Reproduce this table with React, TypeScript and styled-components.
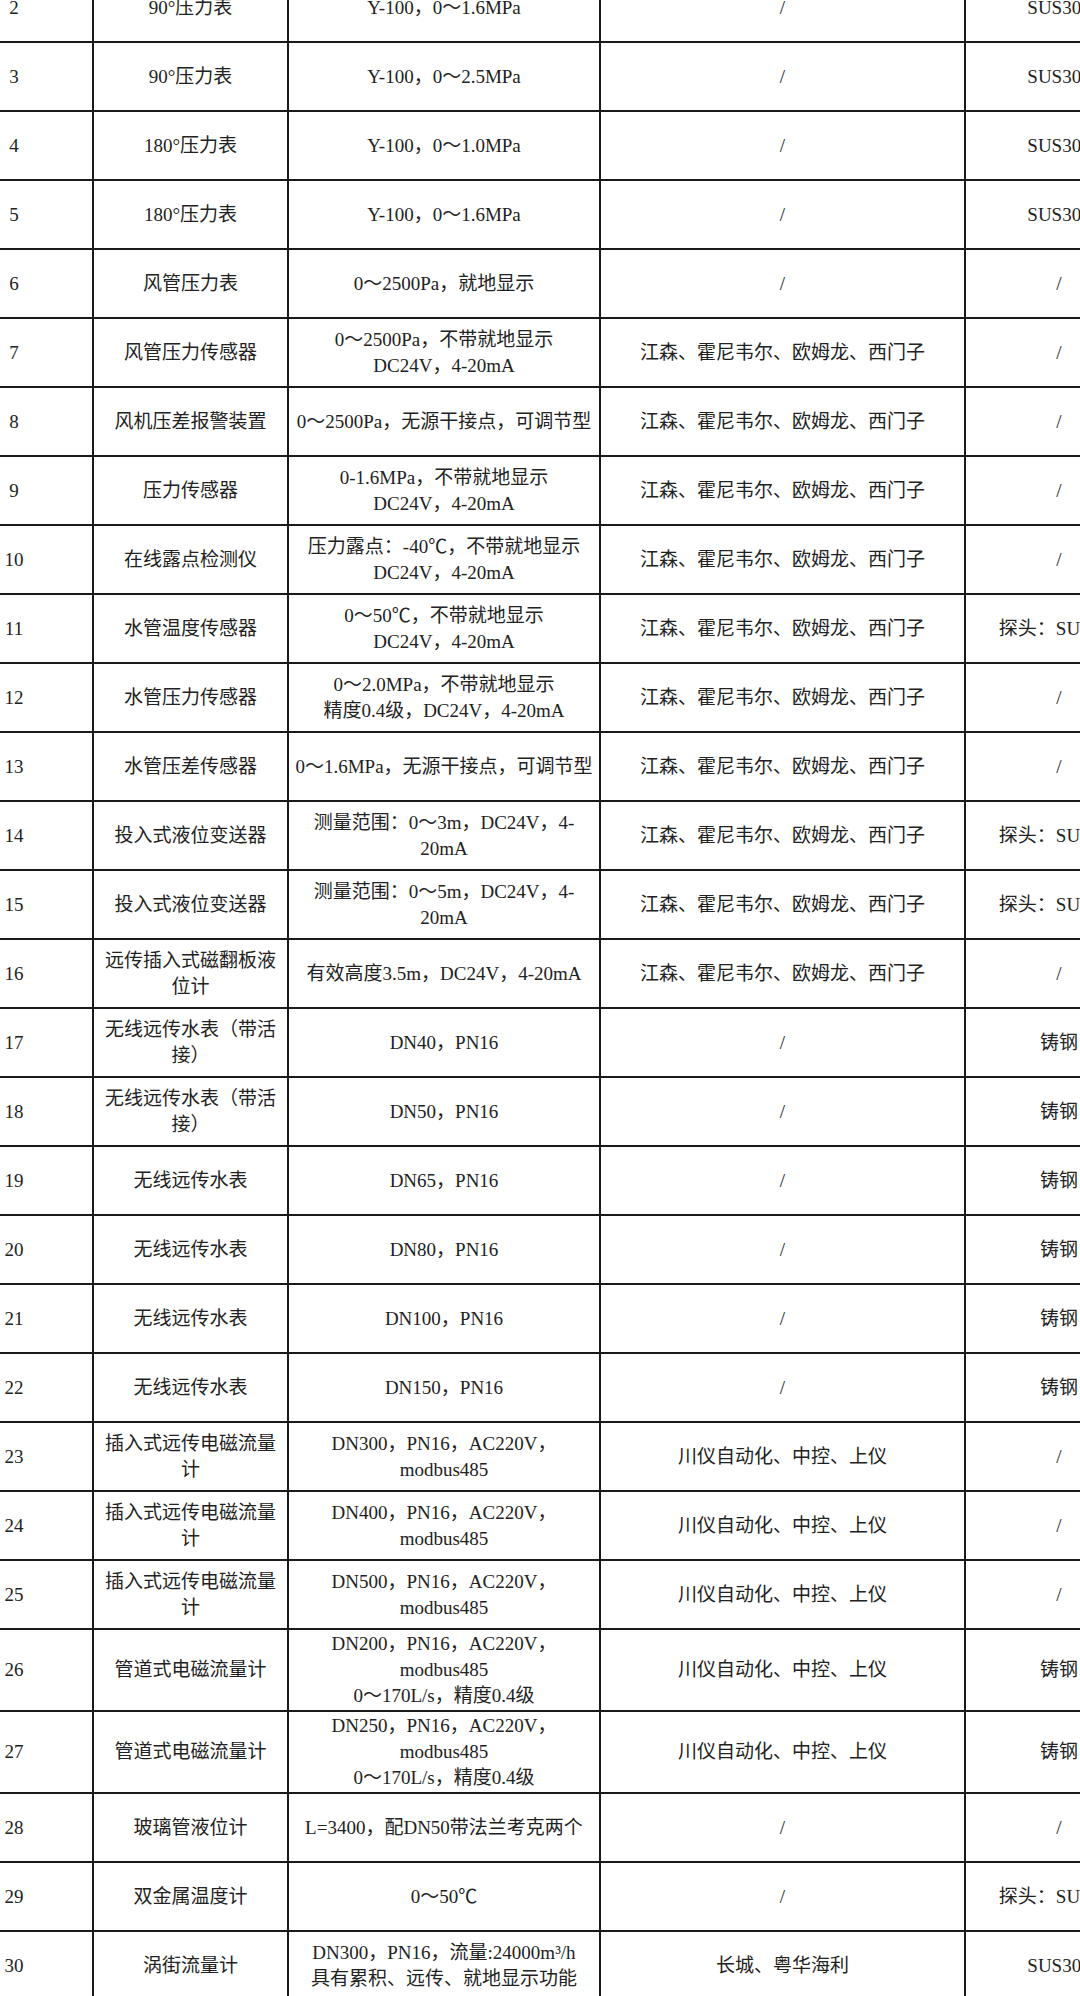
import styled, { createGlobalStyle } from 'styled-components';

const GlobalStyle = createGlobalStyle`
  html, body {
    margin: 0;
    padding: 0;
    background: #ffffff;
  }
  body {
    font-family: "Liberation Serif", "Noto Sans CJK SC", serif;
  }
`;

const JS = '江森、霍尼韦尔、欧姆龙、西门子';
const CY = '川仪自动化、中控、上仪';

// [序号, 名称, 规格, 品牌, 材质] — "\n" splits a cell into lines
const rows: [number, string, string, string, string][] = [
  [2, '90°压力表', 'Y-100，0～1.6MPa', '/', 'SUS304'],
  [3, '90°压力表', 'Y-100，0～2.5MPa', '/', 'SUS304'],
  [4, '180°压力表', 'Y-100，0～1.0MPa', '/', 'SUS304'],
  [5, '180°压力表', 'Y-100，0～1.6MPa', '/', 'SUS304'],
  [6, '风管压力表', '0～2500Pa，就地显示', '/', '/'],
  [7, '风管压力传感器', '0～2500Pa，不带就地显示\nDC24V，4-20mA', JS, '/'],
  [8, '风机压差报警装置', '0～2500Pa，无源干接点，可调节型', JS, '/'],
  [9, '压力传感器', '0-1.6MPa，不带就地显示\nDC24V，4-20mA', JS, '/'],
  [10, '在线露点检测仪', '压力露点：-40℃，不带就地显示\nDC24V，4-20mA', JS, '/'],
  [11, '水管温度传感器', '0～50℃，不带就地显示\nDC24V，4-20mA', JS, '探头：SUS304'],
  [12, '水管压力传感器', '0～2.0MPa，不带就地显示\n精度0.4级，DC24V，4-20mA', JS, '/'],
  [13, '水管压差传感器', '0～1.6MPa，无源干接点，可调节型', JS, '/'],
  [14, '投入式液位变送器', '测量范围：0～3m，DC24V，4-\n20mA', JS, '探头：SUS304'],
  [15, '投入式液位变送器', '测量范围：0～5m，DC24V，4-\n20mA', JS, '探头：SUS304'],
  [16, '远传插入式磁翻板液\n位计', '有效高度3.5m，DC24V，4-20mA', JS, '/'],
  [17, '无线远传水表（带活\n接）', 'DN40，PN16', '/', '铸钢'],
  [18, '无线远传水表（带活\n接）', 'DN50，PN16', '/', '铸钢'],
  [19, '无线远传水表', 'DN65，PN16', '/', '铸钢'],
  [20, '无线远传水表', 'DN80，PN16', '/', '铸钢'],
  [21, '无线远传水表', 'DN100，PN16', '/', '铸钢'],
  [22, '无线远传水表', 'DN150，PN16', '/', '铸钢'],
  [23, '插入式远传电磁流量\n计', 'DN300，PN16，AC220V，\nmodbus485', CY, '/'],
  [24, '插入式远传电磁流量\n计', 'DN400，PN16，AC220V，\nmodbus485', CY, '/'],
  [25, '插入式远传电磁流量\n计', 'DN500，PN16，AC220V，\nmodbus485', CY, '/'],
  [26, '管道式电磁流量计', 'DN200，PN16，AC220V，\nmodbus485\n0～170L/s，精度0.4级', CY, '铸钢'],
  [27, '管道式电磁流量计', 'DN250，PN16，AC220V，\nmodbus485\n0～170L/s，精度0.4级', CY, '铸钢'],
  [28, '玻璃管液位计', 'L=3400，配DN50带法兰考克两个', '/', '/'],
  [29, '双金属温度计', '0～50℃', '/', '探头：SUS304'],
  [30, '涡街流量计', 'DN300，PN16，流量:24000m³/h\n具有累积、远传、就地显示功能', '长城、粤华海利', 'SUS304'],
];

const colWidths = [158, 195, 312, 365, 188];

function CellText({ text }: { text: string }) {
  return (
    <>
      {text.split('\n').map((line, i) => (
        <Line key={i}>{line}</Line>
      ))}
    </>
  );
}

export default function App() {
  return (
    <>
      <GlobalStyle />
      <Viewport>
        <Sheet>
          <colgroup>
            {colWidths.map((w, i) => (
              <col key={i} style={{ width: w }} />
            ))}
          </colgroup>
          <tbody>
            {rows.map(([no, name, spec, brand, material]) => (
              <Row key={no}>
                <Cell>{no}</Cell>
                <Cell>
                  <CellText text={name} />
                </Cell>
                <Cell>
                  <CellText text={spec} />
                </Cell>
                <Cell>
                  <CellText text={brand} />
                </Cell>
                <Cell>
                  <CellText text={material} />
                </Cell>
              </Row>
            ))}
          </tbody>
        </Sheet>
      </Viewport>
    </>
  );
}

const Viewport = styled.div`
  width: 1080px;
  height: 1996px;
  overflow: hidden;
  background: #ffffff;
`;

// the sheet is scrolled: its first column and first row start off screen
const Sheet = styled.table`
  width: 1218px;
  margin-left: -66px;
  margin-top: -28px;
  table-layout: fixed;
  border-collapse: collapse;
  color: #222222;
  font-size: 19px;
`;

const Row = styled.tr`
  height: 69px;
`;

const Cell = styled.td`
  border: 2px solid #1a1a1a;
  padding: 1px 2px;
  text-align: center;
  vertical-align: middle;
  line-height: 26px;
`;

const Line = styled.span`
  display: block;
  white-space: nowrap;
`;
